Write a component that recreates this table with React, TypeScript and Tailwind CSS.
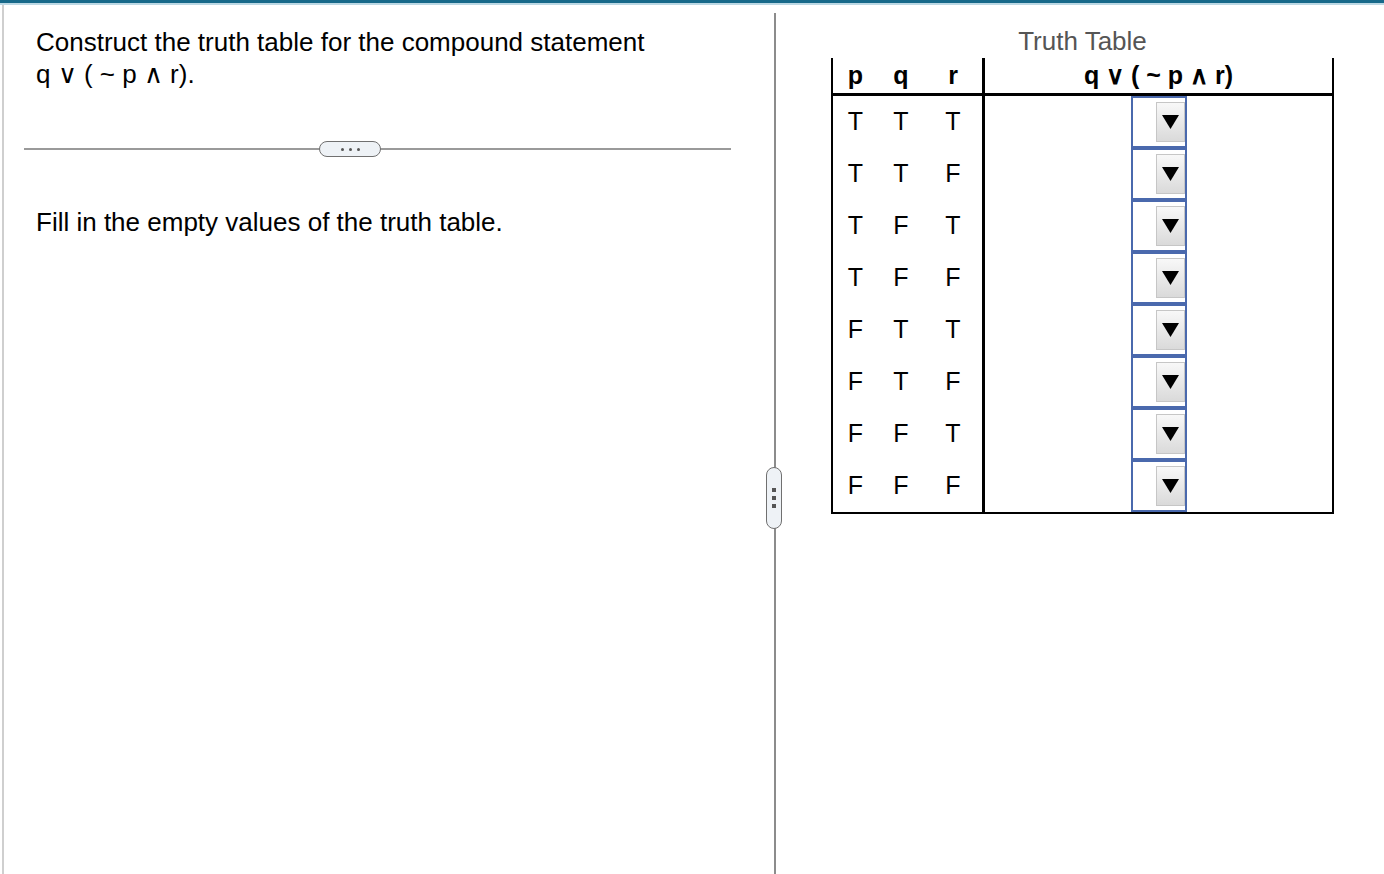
import React from "react";

const rows = [
  ["T", "T", "T"],
  ["T", "T", "F"],
  ["T", "F", "T"],
  ["T", "F", "F"],
  ["F", "T", "T"],
  ["F", "T", "F"],
  ["F", "F", "T"],
  ["F", "F", "F"],
];

const cellWidths = ["w-[45px]", "w-[46px]", "w-[58px]"];

function Dropdown() {
  return (
    <div className="flex h-full w-[56px] items-center justify-end border-2 border-[#4a69ad] bg-white">
      <div className="flex h-[40px] w-[29px] items-center justify-center border border-[#c6c6c6] bg-gradient-to-b from-[#f8f8f8] to-[#dadada]">
        <svg width="17" height="14" viewBox="0 0 17 14">
          <polygon points="0,0 17,0 8.5,14" fill="#000" />
        </svg>
      </div>
    </div>
  );
}

function TruthTable() {
  return (
    <div className="w-[503px] border-x-2 border-b-2 border-black">
      <div className="flex h-[38px] border-b-[3px] border-black font-bold text-[25px]">
        <div className="flex w-[152px] items-center border-r-[3px] border-black">
          {["p", "q", "r"].map((h, i) => (
            <span key={h} className={`${cellWidths[i]} text-center`}>
              {h}
            </span>
          ))}
        </div>
        <div className="flex flex-1 items-center justify-center">q ∨ ( ~ p ∧ r)</div>
      </div>
      {rows.map((r, idx) => (
        <div key={idx} className="flex h-[52px] text-[25px]">
          <div className="flex w-[152px] items-center border-r-[3px] border-black">
            {r.map((v, i) => (
              <span key={i} className={`${cellWidths[i]} text-center`}>
                {v}
              </span>
            ))}
          </div>
          <div className="flex flex-1 justify-center">
            <Dropdown />
          </div>
        </div>
      ))}
    </div>
  );
}

export default function App() {
  return (
    <div className="h-[874px] w-[1384px] overflow-hidden bg-white font-['Liberation_Sans',Arial,sans-serif] text-black">
      <div className="h-[3px] bg-[#17698a]" />
      <div className="h-[2px] bg-[#bcd8e4]" />
      <div className="flex h-[869px]">
        <div className="ml-[2px] w-[2px] bg-[#cfcfcf]" />

        {/* question side */}
        <div className="w-[770px]">
          <div className="pl-[32px] pt-[21px] text-[26px] leading-[32px]">
            <p>Construct the truth table for the compound statement</p>
            <p>q ∨ ( ~ p ∧ r).</p>
          </div>
          <div className="relative ml-[20px] mt-[51px] h-[16px] w-[707px]">
            <div className="absolute left-0 right-0 top-[7px] h-[2px] bg-[#9a9a9a]" />
            <div className="absolute left-[295px] top-0 flex h-[16px] w-[62px] items-center justify-center gap-[5px] rounded-full border-[1.5px] border-[#707070] bg-[#eef2f6]">
              <span className="h-[3px] w-[3px] rounded-full bg-[#555]" />
              <span className="h-[3px] w-[3px] rounded-full bg-[#555]" />
              <span className="h-[3px] w-[3px] rounded-full bg-[#555]" />
            </div>
          </div>
          <p className="mt-[49px] pl-[32px] text-[26px] leading-[32px]">
            Fill in the empty values of the truth table.
          </p>
        </div>

        {/* splitter */}
        <div className="relative mt-[8px] w-[2px] bg-[#8c8c8c]">
          <div className="absolute left-[-8px] top-[454px] flex h-[62px] w-[16px] flex-col items-center justify-center gap-[4px] rounded-full border-[1.5px] border-[#707070] bg-[#eef2f6]">
            <span className="h-[4px] w-[4px] bg-[#555]" />
            <span className="h-[4px] w-[4px] bg-[#555]" />
            <span className="h-[4px] w-[4px] bg-[#555]" />
          </div>
        </div>

        {/* answer side */}
        <div className="flex-1 pl-[55px] pt-[22px]">
          <div className="h-[31px] w-[503px] text-center text-[26px] leading-[28px] text-[#555]">
            Truth Table
          </div>
          <TruthTable />
        </div>
      </div>
    </div>
  );
}
